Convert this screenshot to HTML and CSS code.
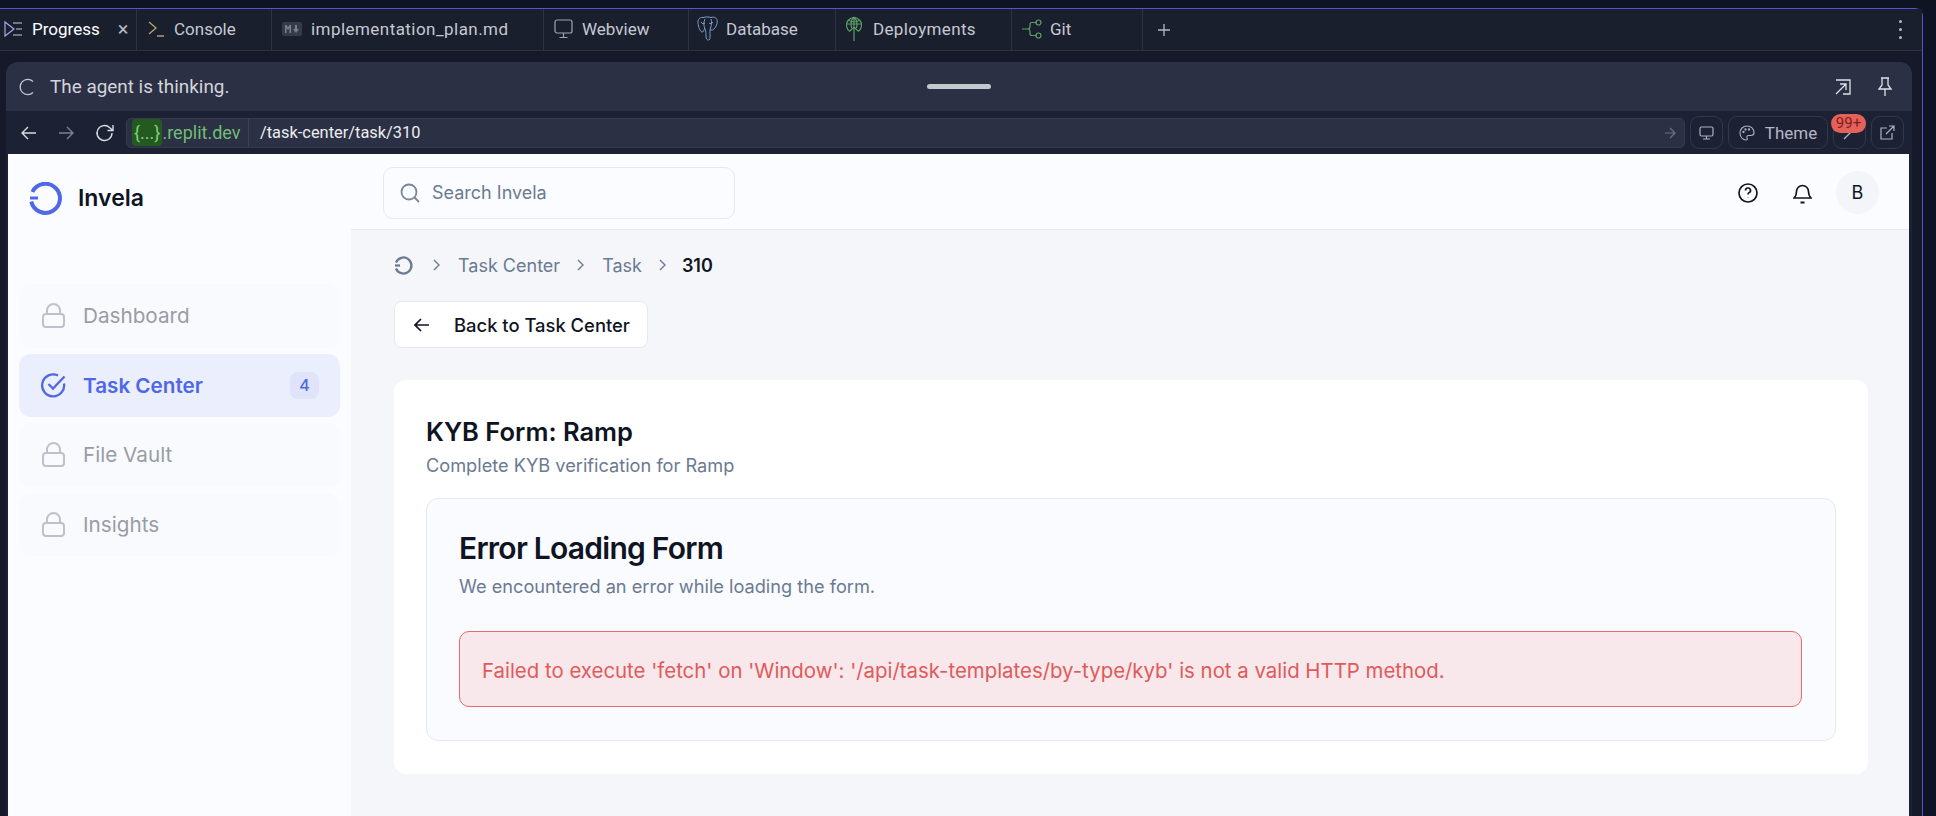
FILE: index.html
```html
<!DOCTYPE html>
<html lang="en">
<head>
  <meta charset="UTF-8" />
  <title>Invela - Replit</title>
  <link rel="stylesheet" href="styles.css">
</head>
<body>
  <div class="frame">

    <!-- ide tabs -->
    <div class="tabs">
      <div class="tab tab-first">
        <svg class="tab-icon" width="19" height="18" viewBox="0 0 19 18" fill="none" stroke="#a9a6e8" stroke-width="1.2"><path d="M1 2l9 7-9 7z"/><path d="M9 3h9M12 9h6M9 15h9" stroke="#c9cbd6"/></svg>
        <span class="tab-active-label">Progress</span>
        <span class="tab-close">×</span>
      </div>
      <div class="tab tab-console">
        <svg class="tab-icon" width="16" height="18" viewBox="0 0 16 18" fill="none" stroke="#b8a468" stroke-width="1.3"><path d="M1 2l7 6-7 6"/><path d="M9 16h7" stroke="#c4b27a"/></svg>
        <span>Console</span>
      </div>
      <div class="tab tab-file">
        <svg class="tab-icon" width="20" height="14" viewBox="0 0 20 14" fill="#363b49"><rect width="20" height="14" rx="2"/><path d="M3 11V3h1.500L6 5.500 7.500 3H9v8H7.500V6L6 8 4.500 6v5zM13 3h2v4h2l-3 4-3-4h2z" fill="#7a7e8c"/></svg>
        <span>implementation_plan.md</span>
      </div>
      <div class="tab tab-webview">
        <svg class="tab-icon" width="19" height="20" viewBox="0 0 19 20" fill="none" stroke="#9ea3b0" stroke-width="1.2"><rect x="1" y="1" width="17" height="13" rx="2"/><path d="M9.500 14v4M5.500 18.500h8"/></svg>
        <span>Webview</span>
      </div>
      <div class="tab tab-db">
        <svg class="tab-icon" width="21" height="25" viewBox="0 0 21 25" fill="none" stroke="#7f9cc4" stroke-width="1"><path d="M6 1.500C2.500 1 .5 3.500 1 7.500c.4 3 2 8 4 8.500 1.500.3 2-2 2.500-3.500"/><path d="M6 1.500C8 .8 12 .8 14 1.500c5-1.500 7 2 6 6-.7 3-3 6-4.500 6.500-1 .3-2 0-2.500-.5"/><path d="M8 3C6.500 6 6.500 10 8 13c1 2 1 5 1 7 0 3 1 4 2.500 4S13 22 13 19c0-2-.3-5 .5-7 1-2.500 1.500-6 .5-9"/><path d="M4 6c1 2 3 2 4 1M12 7c1 1 3 1 4-1"/></svg>
        <span>Database</span>
      </div>
      <div class="tab tab-deploy">
        <svg class="tab-icon" width="16" height="26" viewBox="0 0 16 26" fill="none" stroke="#5c9e68" stroke-width="1.2"><path d="M4 15.500A7.500 7.500 0 1 1 12 15.500"/><path d="M8 1v24M1 8h14M3 4.500c3 1.500 7 1.500 10 0M8 1C5 4 4.500 8 5.500 12M8 1c3 3 3.500 7 2.500 11M4 15l4-4 4 4"/></svg>
        <span>Deployments</span>
      </div>
      <div class="tab tab-git">
        <svg class="tab-icon" width="20" height="22" viewBox="0 0 20 22" fill="none" stroke="#5c9e68" stroke-width="1.2"><path d="M0 11h6M6 11c2 0 2-1 2-3V6.500c0-1.500 1-2 2-2h5M6 11c2 0 2 1 2 3v1.500c0 1.500 1 2 2 2h5"/><circle cx="16.500" cy="4.500" r="2.500"/><circle cx="16.500" cy="17.500" r="2.500"/></svg>
        <span>Git</span>
      </div>
      <div class="tab tab-add">
        <svg width="12" height="12" viewBox="0 0 12 12" stroke="#b4b8c4" stroke-width="1.3"><path d="M6 0v12M0 6h12"/></svg>
      </div>
      <div class="tab-menu">
        <i></i><i></i><i></i>
      </div>
    </div>

    <div class="panel">
      <!-- agent status -->
      <div class="panel-head">
        <div class="status">
          <svg width="17" height="18" viewBox="0 0 17 18" fill="none" stroke="#c6c9d2" stroke-width="1.300"><path d="M14 3.500A7.600 7.600 0 1 0 14 14.500"/></svg>
          <span>The agent is thinking.</span>
        </div>
        <div class="drag-handle"></div>
        <div class="head-actions">
          <svg width="16" height="16" viewBox="0 0 16 16" fill="none" stroke="#dfe1e7" stroke-width="1.300"><path d="M1 1h14v14H8M1 15L11 5M5 5h6v6"/></svg>
          <svg width="14" height="19" viewBox="0 0 14 19" fill="none" stroke="#dfe1e7" stroke-width="1.300"><path d="M3 1h8M4 1v7L1 12h12l-3-4V1M7 12v7"/></svg>
        </div>
      </div>

      <!-- webview url bar -->
      <div class="toolbar">
        <div class="nav-arrows">
          <svg width="16" height="14" viewBox="0 0 16 14" fill="none" stroke="#d8dae1" stroke-width="1.400"><path d="M15 7H1M7 1L1 7l6 6"/></svg>
          <svg width="16" height="14" viewBox="0 0 16 14" fill="none" stroke="#7d8190" stroke-width="1.400"><path d="M1 7h14M9 1l6 6-6 6"/></svg>
          <svg width="20" height="20" viewBox="0 0 20 20" fill="none" stroke="#d8dae1" stroke-width="1.400"><path d="M17 10a7.500 7.500 0 1 1-2.200-5.300L18 7.500M18 2v5.500h-5.500"/></svg>
        </div>
        <div class="url-bar">
          <div class="url-host"><span class="url-chip">{...}</span>.replit.dev</div>
          <div class="url-path">/task-center/task/310</div>
          <svg width="12" height="12" viewBox="0 0 12 12" fill="none" stroke="#6d7282" stroke-width="1.200"><path d="M1 6h10M6 1l5 5-5 5"/></svg>
        </div>
        <div class="tool-btn tool-screen">
          <svg width="15" height="14" viewBox="0 0 15 14" fill="none" stroke="#aeb2be" stroke-width="1.200"><rect x="1" y="1" width="13" height="9" rx="1.500"/><path d="M7.500 10v3M4 13h7"/></svg>
        </div>
        <div class="tool-btn tool-theme">
          <svg width="16" height="16" viewBox="0 0 16 16" fill="none" stroke="#aeb2be" stroke-width="1.100"><path d="M8 1C4 1 1 4 1 8s3 7 6 7c1.500 0 1.500-1 1-2s0-2.500 1.500-2.500H12c2 0 3-1 3-3C15 4 12 1 8 1z"/><circle cx="4.500" cy="7" r=".6"/><circle cx="6.500" cy="4.500" r=".6"/><circle cx="10" cy="4.500" r=".6"/></svg>
          <span>Theme</span>
        </div>
        <div class="tool-btn tool-wrench">
          <svg width="14" height="14" viewBox="0 0 14 14" fill="none" stroke="#aeb2be" stroke-width="1.400"><path d="M1 13l7-7M8 6c1 1 3 0 4-2"/></svg>
          <span class="count-badge">99+</span>
        </div>
        <div class="tool-btn tool-open">
          <svg width="15" height="15" viewBox="0 0 15 15" fill="none" stroke="#aeb2be" stroke-width="1.200"><path d="M7 3H1v11h11V8M6 9l8-8M9 1h5v5"/></svg>
        </div>
      </div>

      <!-- the app in the webview -->
      <div class="app">
        <aside class="sidebar">
          <div class="brand">
            <svg width="33" height="33" viewBox="0 0 33 33" fill="none" stroke="#4f68e8" stroke-width="4"><path d="M3.400 10A14.500 14.500 0 1 1 2.300 19.500"/><path d="M1 16h8" stroke-width="3"/></svg>
            <span>Invela</span>
          </div>
          <nav class="side-nav">
            <div class="side-item">
              <svg class="lock" width="23" height="25" viewBox="0 0 23 25" fill="none" stroke="#bcc1cb" stroke-width="2"><rect x="1" y="11" width="21" height="13" rx="3"/><path d="M5 11V7.500a6.500 6.500 0 0 1 13 0V11"/></svg>
              <span>Dashboard</span>
            </div>
            <div class="side-item side-item-active">
              <svg width="25" height="25" viewBox="0 0 25 25" fill="none" stroke="#4f68e8" stroke-width="2.300"><path d="M23 10.500A11 11 0 1 1 17 2.500"/><path d="M7.500 11l4.500 4.500L23.500 3.500"/></svg>
              <span>Task Center</span>
              <span class="side-badge">4</span>
            </div>
            <div class="side-item">
              <svg class="lock" width="23" height="25" viewBox="0 0 23 25" fill="none" stroke="#bcc1cb" stroke-width="2"><rect x="1" y="11" width="21" height="13" rx="3"/><path d="M5 11V7.500a6.500 6.500 0 0 1 13 0V11"/></svg>
              <span>File Vault</span>
            </div>
            <div class="side-item">
              <svg class="lock" width="23" height="25" viewBox="0 0 23 25" fill="none" stroke="#bcc1cb" stroke-width="2"><rect x="1" y="11" width="21" height="13" rx="3"/><path d="M5 11V7.500a6.500 6.500 0 0 1 13 0V11"/></svg>
              <span>Insights</span>
            </div>
          </nav>
        </aside>

        <div class="content">
          <header class="topbar">
            <div class="search">
              <svg width="20" height="20" viewBox="0 0 20 20" fill="none" stroke="#7a8699" stroke-width="1.800"><circle cx="9" cy="9" r="7.500"/><path d="M14.500 14.500L19 19"/></svg>
              <span>Search Invela</span>
            </div>
            <div class="top-actions">
              <svg width="20" height="20" viewBox="0 0 20 20" fill="none" stroke="#0f1422" stroke-width="1.700"><circle cx="10" cy="10" r="9"/><path d="M7.500 7.500a2.500 2.500 0 1 1 3.500 2.300c-.7.300-1 .8-1 1.700M10 14.500v.2"/></svg>
              <svg width="19" height="22" viewBox="0 0 19 22" fill="none" stroke="#0f1422" stroke-width="1.700"><path d="M1 16c1.500-1.500 2.500-2 2.500-6.500a6 6 0 0 1 12 0c0 4.500 1 5 2.500 6.500z"/><path d="M7.500 20.500h4" stroke-width="2"/></svg>
              <div class="avatar">B</div>
            </div>
          </header>

          <main class="main">
            <div class="crumbs">
              <svg width="19" height="19" viewBox="0 0 19 19" fill="none" stroke="#6b7a90" stroke-width="2.300"><path d="M2 6.500A8 8 0 1 1 2 12.500"/><path d="M1 9.500h5"/></svg>
              <svg class="chev chev-first" width="8" height="12" viewBox="0 0 8 12" fill="none" stroke="#6b7a90" stroke-width="1.400"><path d="M1 1l5 5-5 5"/></svg>
              <span>Task Center</span>
              <svg class="chev" width="8" height="12" viewBox="0 0 8 12" fill="none" stroke="#6b7a90" stroke-width="1.400"><path d="M1 1l5 5-5 5"/></svg>
              <span>Task</span>
              <svg class="chev" width="8" height="12" viewBox="0 0 8 12" fill="none" stroke="#6b7a90" stroke-width="1.400"><path d="M1 1l5 5-5 5"/></svg>
              <span class="crumb-current">310</span>
            </div>

            <div class="back-btn">
              <svg width="16" height="14" viewBox="0 0 16 14" fill="none" stroke="#0f1422" stroke-width="1.700"><path d="M15 7H1M7 1L1 7l6 6"/></svg>
              <span>Back to Task Center</span>
            </div>

            <section class="card">
              <h2>KYB Form: Ramp</h2>
              <p class="card-sub">Complete KYB verification for Ramp</p>
              <div class="inner">
                <h1>Error Loading Form</h1>
                <p class="inner-sub">We encountered an error while loading the form.</p>
                <div class="alert">Failed to execute 'fetch' on 'Window': '/api/task-templates/by-type/kyb' is not a valid HTTP method.</div>
              </div>
            </section>
          </main>
        </div>
      </div>
    </div>
  </div>
</body>
</html>
```

FILE: styles.css
```css
* {
  box-sizing: border-box;
}
html, body {
  height: 100%;
}
body {
  margin: 0;
  background-color: #0f1425;
  font-family: Inter, "Liberation Sans", sans-serif;
  overflow: hidden;
}
svg {
  flex: none;
  display: block;
}
p, h1, h2 {
  margin: 0;
}

/* ide frame */
.frame {
  width: 1925px;
  height: 808px;
  margin: 8px 0 0 -2px;
  background-color: #151929;
  border: 1px solid #5a50d2;
  border-bottom: none;
  border-top-right-radius: 8px;
  display: flex;
  flex-direction: column;
}
.tabs {
  height: 42px;
  flex: none;
  display: flex;
  background-color: #1a1f2e;
  border-bottom: 1px solid #2d3240;
  font-family: Roboto, "Liberation Sans", sans-serif;
  font-size: 17px;
  color: #c6c9d2;
}
.tab {
  flex: none;
  display: flex;
  align-items: center;
  gap: 9px;
  padding: 0 0 2px 10px;
  border-right: 1px solid #2d3240;
}
.tab-first {
  width: 138px;
  padding-left: 5px;
  gap: 9px;
}
.tab-console {
  width: 135px;
  padding-left: 11px;
  gap: 10px;
}
.tab-file {
  width: 272px;
}
.tab-file span {
  letter-spacing: 0.45px;
}
.tab-webview {
  width: 145px;
}
.tab-db {
  width: 147px;
  padding-left: 8px;
  gap: 8px;
}
.tab-deploy {
  width: 176px;
  gap: 11px;
}
.tab-deploy span {
  letter-spacing: 0.35px;
}
.tab-git {
  width: 131px;
  gap: 8px;
}
.tab-active-label {
  color: #ffffff;
}
.tab-close {
  margin-left: 9px;
  font-size: 20px;
  color: #b4b8c4;
}
.tab-add {
  padding: 0 15px;
  border-right: none;
}
.tab-menu {
  margin-left: auto;
  margin-right: 20px;
  display: flex;
  flex-direction: column;
  justify-content: center;
  gap: 5px;
}
.tab-menu i {
  width: 3px;
  height: 3px;
  border-radius: 50%;
  background-color: #b4b8c4;
}

/* panel */
.panel {
  flex: 1;
  min-height: 0;
  margin: 11px 10px 0 7px;
  background-color: #1c2133;
  border-radius: 12px 12px 0 0;
  display: flex;
  flex-direction: column;
}
.panel-head {
  height: 49px;
  flex: none;
  padding: 0 20px 0 13px;
  display: flex;
  align-items: center;
  justify-content: space-between;
  position: relative;
  background-color: #2b3044;
  border-radius: 12px 12px 0 0;
}
.status {
  display: flex;
  align-items: center;
  gap: 14px;
  font-family: Roboto, "Liberation Sans", sans-serif;
  font-size: 18.9px;
  color: #d3d5dc;
}
.drag-handle {
  position: absolute;
  left: 921px;
  top: 22px;
  width: 64px;
  height: 5px;
  border-radius: 3px;
  background-color: #c4c8d0;
}
.head-actions {
  display: flex;
  align-items: center;
  gap: 27px;
}
.toolbar {
  height: 43px;
  flex: none;
  margin: 0 3px 0 2px;
  padding: 0 5px 0 13px;
  display: flex;
  align-items: center;
  gap: 5px;
  background-color: #1c2133;
  font-family: Roboto, "Liberation Sans", sans-serif;
}
.nav-arrows {
  width: 100px;
  display: flex;
  align-items: center;
  gap: 21px;
}
.url-bar {
  flex: 1;
  height: 30px;
  display: flex;
  align-items: center;
  padding-right: 8px;
  background-color: #2b3044;
  border: 1px solid #353a4e;
  border-radius: 5px;
  font-size: 16.4px;
}
.url-host {
  height: 100%;
  width: 122px;
  padding-left: 5px;
  display: flex;
  align-items: center;
  flex: none;
  font-size: 18px;
  color: #6fbf73;
  border-right: 1px solid #3c4155;
}
.url-chip {
  padding: 3px 2px;
  border-radius: 4px;
  background-color: #24591f;
  color: #7ed07f;
}
.url-path {
  flex: 1;
  padding-left: 11px;
  color: #eceef2;
}
.tool-btn {
  height: 33px;
  display: flex;
  align-items: center;
  justify-content: center;
  border: 1px solid #333849;
  border-radius: 9px;
  position: relative;
}
.tool-screen, .tool-wrench, .tool-open {
  width: 33px;
}
.tool-theme {
  width: 100px;
  gap: 10px;
  font-size: 17px;
  color: #b4b8c4;
}
.count-badge {
  position: absolute;
  left: -3px;
  top: -3px;
  width: 35px;
  height: 19px;
  border-radius: 10px;
  background-color: #e5625b;
  color: #7f1d1d;
  font-size: 15px;
  line-height: 19px;
  text-align: center;
}

/* invela app */
.app {
  flex: 1;
  min-height: 0;
  margin: 0 3px 0 2px;
  display: flex;
}
.sidebar {
  width: 343px;
  flex: none;
  padding: 0 11px;
  background-color: #fbfcff;
}
.brand {
  height: 75px;
  padding: 13px 0 0 10px;
  display: flex;
  align-items: center;
  gap: 16px;
  font-size: 23px;
  font-weight: 600;
  color: #0f1422;
}
.side-nav {
  margin-top: 55px;
  display: flex;
  flex-direction: column;
  gap: 6px;
}
.side-item {
  height: 63.5px;
  padding: 0 21px 0 23px;
  display: flex;
  align-items: center;
  gap: 18px;
  border-radius: 12px;
  background-color: #f9fafd;
  font-size: 20.7px;
  color: #989ca6;
}
.side-item-active {
  padding-left: 22px;
  gap: 17px;
  background-color: #ebeefc;
  color: #4f68e8;
  font-weight: 600;
}
.side-badge {
  margin-left: auto;
  width: 29px;
  height: 27px;
  border-radius: 8px;
  background-color: #dfe4fa;
  font-size: 16px;
  font-weight: 500;
  line-height: 27px;
  text-align: center;
}
.content {
  flex: 1;
  min-width: 0;
  display: flex;
  flex-direction: column;
  background-color: #f4f6fa;
}
.topbar {
  height: 76px;
  flex: none;
  padding: 2px 30px 0 32px;
  display: flex;
  align-items: center;
  justify-content: space-between;
  background-color: #fbfcff;
  border-bottom: 1px solid #e6e9f0;
}
.search {
  width: 352px;
  height: 52px;
  padding: 0 16px;
  display: flex;
  align-items: center;
  gap: 12px;
  background-color: #fbfcff;
  border: 1px solid #e6e9f0;
  border-radius: 10px;
  font-size: 18px;
  color: #6b7a90;
}
.top-actions {
  display: flex;
  align-items: center;
  gap: 35px;
}
.avatar {
  width: 43px;
  height: 43px;
  margin-left: -11px;
  border-radius: 50%;
  background-color: #f3f5f8;
  color: #0f1422;
  font-size: 18px;
  line-height: 43px;
  text-align: center;
}
.main {
  flex: 1;
  padding: 24px 41px 0 43px;
}
.crumbs {
  height: 22px;
  display: flex;
  align-items: center;
  gap: 17px;
  font-size: 18px;
  color: #6b7a90;
}
.chev-first {
  margin-left: 3px;
}
.crumb-current {
  margin-left: -2px;
  color: #0f1422;
  font-weight: 600;
}
.back-btn {
  width: 254px;
  height: 47px;
  margin-top: 25px;
  padding-left: 19px;
  display: flex;
  align-items: center;
  gap: 24px;
  background-color: #ffffff;
  border: 1px solid #e6e9f0;
  border-radius: 8px;
  font-size: 18.4px;
  font-weight: 500;
  color: #0f1422;
}
.card {
  margin-top: 32px;
  padding: 36px 32px 33px;
  background-color: #ffffff;
  border-radius: 12px;
}
.card h2 {
  font-size: 25.5px;
  font-weight: 600;
  line-height: 32px;
  color: #0f1422;
}
.card-sub {
  margin-top: 3px;
  font-size: 18.2px;
  line-height: 28px;
  color: #6b7a90;
}
.inner {
  margin-top: 19px;
  padding: 30px 33px 33px 32px;
  background-color: #fafbff;
  border: 1px solid #e6e9f0;
  border-radius: 12px;
}
.inner h1 {
  font-size: 30px;
  font-weight: 600;
  line-height: 38px;
  letter-spacing: -0.75px;
  color: #0f1422;
}
.inner-sub {
  margin-top: 5px;
  font-size: 18.2px;
  line-height: 28px;
  color: #6b7a90;
}
.alert {
  height: 76px;
  margin-top: 31px;
  padding: 3px 22px 0;
  display: flex;
  align-items: center;
  background-color: #f8e8ec;
  border: 1px solid #e56b6b;
  border-radius: 10px;
  font-size: 20.4px;
  color: #e05a5a;
}
```
